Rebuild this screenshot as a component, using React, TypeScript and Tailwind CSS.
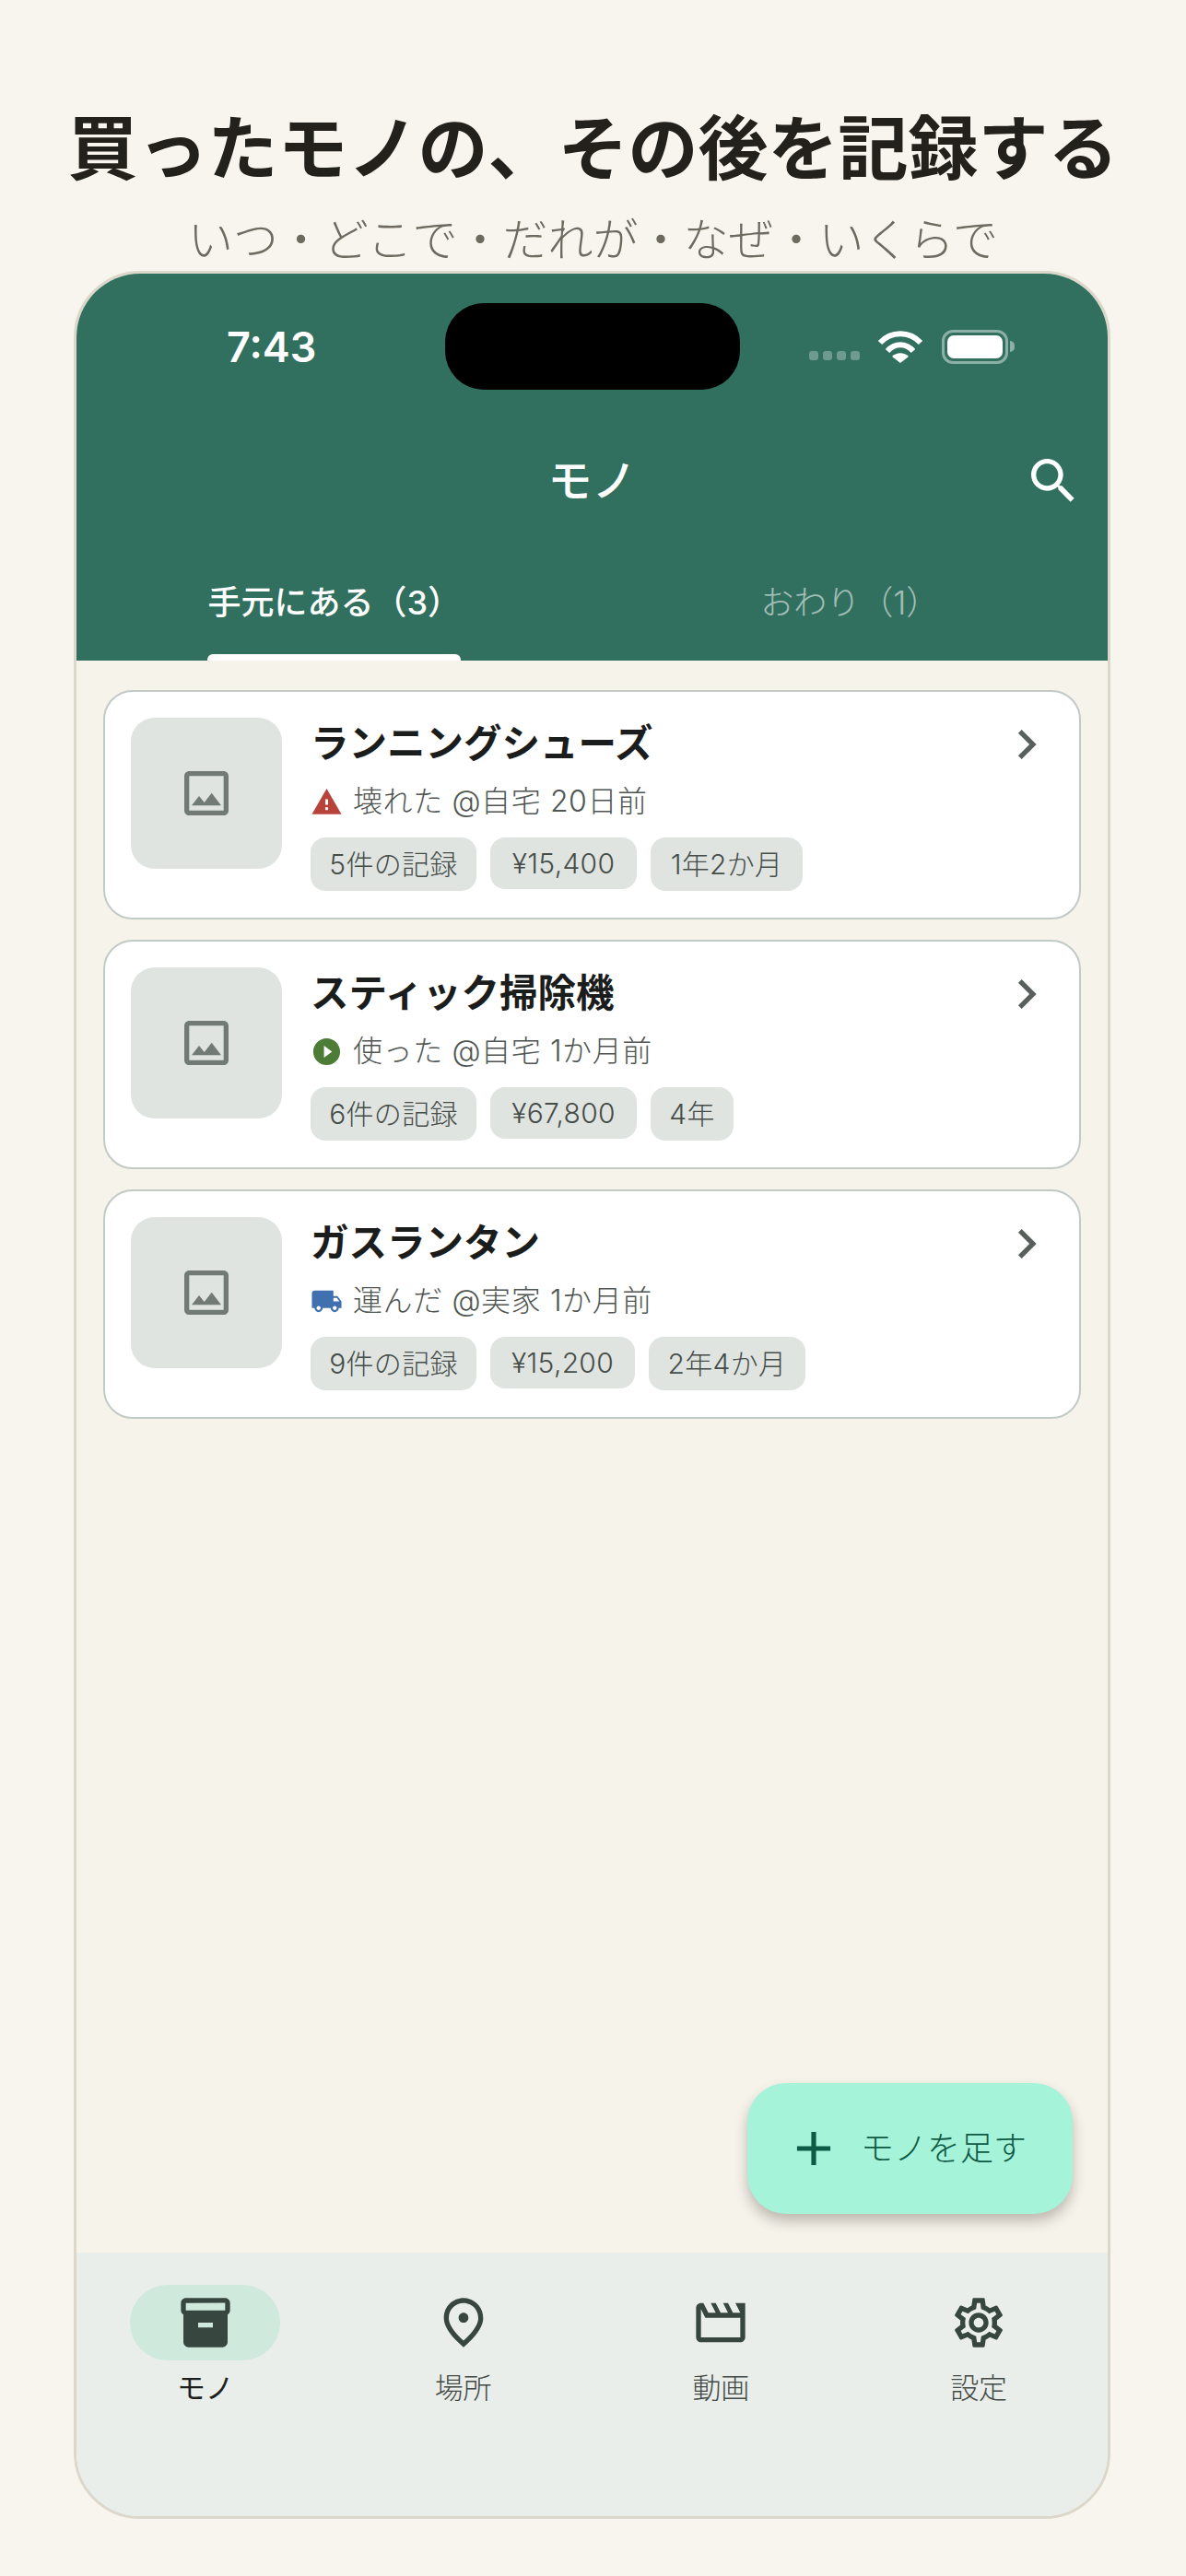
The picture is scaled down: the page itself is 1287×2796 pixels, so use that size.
import React from "react";

const ICONS = {
  image:
    "M19 5v14H5V5h14m0-2H5c-1.1 0-2 .9-2 2v14c0 1.1.9 2 2 2h14c1.1 0 2-.9 2-2V5c0-1.1-.9-2-2-2zm-4.86 8.86-3 3.87L9 13.14 6 17h12l-3.86-5.14z",
  chevron: "M10 6 8.59 7.41 13.17 12l-4.58 4.59L10 18l6-6z",
  search:
    "M15.5 14h-.79l-.28-.27C15.41 12.59 16 11.11 16 9.5 16 5.91 13.09 3 9.5 3S3 5.91 3 9.5 5.91 16 9.5 16c1.61 0 3.09-.59 4.23-1.57l.27.28v.79l5 4.99L20.49 19l-4.99-5zm-6 0C7.01 14 5 11.99 5 9.5S7.01 5 9.5 5 14 7.01 14 9.5 11.99 14 9.5 14z",
  add: "M19 13h-6v6h-2v-6H5v-2h6V5h2v6h6v2z",
  warning: "M1 21h22L12 2 1 21zm12-3h-2v-2h2v2zm0-4h-2v-4h2v4z",
  play: "M12 2C6.48 2 2 6.48 2 12s4.48 10 10 10 10-4.48 10-10S17.52 2 12 2zm-2 14.5v-9l6 4.5-6 4.5z",
  truck:
    "M20 8h-3V4H3c-1.1 0-2 .9-2 2v11h2c0 1.66 1.34 3 3 3s3-1.34 3-3h6c0 1.66 1.34 3 3 3s3-1.34 3-3h2v-5l-3-4zM6 18.5c-.83 0-1.5-.67-1.5-1.5s.67-1.5 1.5-1.5 1.5.67 1.5 1.5-.67 1.5-1.5 1.5zm13.5-9 1.96 2.5H17V9.5h2.5zm-1.5 9c-.83 0-1.5-.67-1.5-1.5s.67-1.5 1.5-1.5 1.5.67 1.5 1.5-.67 1.5-1.5 1.5z",
  box: "M20 2H4c-1 0-2 .9-2 2v3.01c0 .72.43 1.34 1 1.69V20c0 1.1 1.1 2 2 2h14c.9 0 2-.9 2-2V8.7c.57-.35 1-.97 1-1.69V4c0-1.1-1-2-2-2zm-5 12H9v-2h6v2zm5-7H4V4l16-.02V7z",
  place:
    "M12 12c-1.1 0-2-.9-2-2s.9-2 2-2 2 .9 2 2-.9 2-2 2zm6-1.8C18 6.57 15.35 4 12 4s-6 2.57-6 6.2c0 2.34 1.95 5.44 6 9.14 4.05-3.7 6-6.8 6-9.14zM12 2c4.2 0 8 3.22 8 8.2 0 3.32-2.67 7.25-8 11.8-5.33-4.55-8-8.48-8-11.8C4 5.22 7.8 2 12 2z",
  movie:
    "M4 6.47 5.76 10H20v8H4V6.47M22 4h-4l2 4h-3l-2-4h-2l2 4h-3l-2-4H8l2 4H7L5 4H4c-1.1 0-1.99.9-1.99 2L2 18c0 1.1.9 2 2 2h16c1.1 0 2-.9 2-2V4z",
  settings:
    "M19.43 12.98c.04-.32.07-.64.07-.98 0-.34-.03-.66-.07-.98l2.11-1.65c.19-.15.24-.42.12-.64l-2-3.46c-.09-.16-.26-.25-.44-.25-.06 0-.12.01-.17.03l-2.49 1c-.52-.4-1.08-.73-1.69-.98l-.38-2.65C14.46 2.18 14.25 2 14 2h-4c-.25 0-.46.18-.49.42l-.38 2.65c-.61.25-1.17.59-1.69.98l-2.49-1c-.06-.02-.12-.03-.18-.03-.17 0-.34.09-.43.25l-2 3.46c-.13.22-.07.49.12.64l2.11 1.65c-.04.32-.07.65-.07.98 0 .33.03.66.07.98l-2.11 1.65c-.19.15-.24.42-.12.64l2 3.46c.09.16.26.25.44.25.06 0 .12-.01.17-.03l2.49-1c.52.4 1.08.73 1.69.98l.38 2.65c.03.24.24.42.49.42h4c.25 0 .46-.18.49-.42l.38-2.65c.61-.25 1.17-.59 1.69-.98l2.49 1c.06.02.12.03.18.03.17 0 .34-.09.43-.25l2-3.46c.12-.22.07-.49-.12-.64l-2.11-1.65zm-1.98-1.71c.04.31.05.52.05.73 0 .21-.02.43-.05.73l-.14 1.13.89.7 1.08.84-.7 1.21-1.27-.51-1.04-.42-.9.68c-.43.32-.84.56-1.25.73l-1.06.43-.16 1.13-.2 1.35h-1.4l-.19-1.35-.16-1.13-1.06-.43c-.43-.18-.83-.41-1.23-.71l-.91-.7-1.06.43-1.27.51-.7-1.21 1.08-.84.89-.7-.14-1.13c-.03-.31-.05-.54-.05-.74s.02-.43.05-.73l.14-1.13-.89-.7-1.08-.84.7-1.21 1.27.51 1.04.42.9-.68c.43-.32.84-.56 1.25-.73l1.06-.43.16-1.13.2-1.35h1.39l.19 1.35.16 1.13 1.06.43c.43.18.83.41 1.23.71l.91.7 1.06-.43 1.27-.51.7 1.21-1.07.85-.89.7.14 1.13zM12 8c-2.21 0-4 1.79-4 4s1.79 4 4 4 4-1.79 4-4-1.79-4-4-4zm0 6c-1.1 0-2-.9-2-2s.9-2 2-2 2 .9 2 2-.9 2-2 2z",
};

function Icon({ name, className }: { name: keyof typeof ICONS; className: string }) {
  return (
    <svg viewBox="0 0 24 24" fill="currentColor" className={className}>
      <path d={ICONS[name]} />
    </svg>
  );
}

interface Item {
  name: string;
  icon: keyof typeof ICONS;
  iconColor: string;
  status: string;
  chips: { label: string; width: string; short?: boolean }[];
}

const items: Item[] = [
  {
    name: "ランニングシューズ",
    icon: "warning",
    iconColor: "text-[#b8433a]",
    status: "壊れた @自宅 20日前",
    chips: [
      { label: "5件の記録", width: "w-[180px]" },
      { label: "¥15,400", width: "w-[159px]", short: true },
      { label: "1年2か月", width: "w-[165px]" },
    ],
  },
  {
    name: "スティック掃除機",
    icon: "play",
    iconColor: "text-[#4d7c36]",
    status: "使った @自宅 1か月前",
    chips: [
      { label: "6件の記録", width: "w-[180px]" },
      { label: "¥67,800", width: "w-[159px]", short: true },
      { label: "4年", width: "w-[90px]" },
    ],
  },
  {
    name: "ガスランタン",
    icon: "truck",
    iconColor: "text-[#4070b0]",
    status: "運んだ @実家 1か月前",
    chips: [
      { label: "9件の記録", width: "w-[180px]" },
      { label: "¥15,200", width: "w-[157px]", short: true },
      { label: "2年4か月", width: "w-[170px]" },
    ],
  },
];

const navItems: { label: string; icon: keyof typeof ICONS }[] = [
  { label: "モノ", icon: "box" },
  { label: "場所", icon: "place" },
  { label: "動画", icon: "movie" },
  { label: "設定", icon: "settings" },
];

function StatusBar() {
  return (
    <div className="flex h-[94px] items-center">
      <div className="w-[400px] pl-[163px] font-['Inter',sans-serif] text-[45px] font-semibold leading-none text-white">
        7:43
      </div>
      <div className="h-[94px] w-[320px] rounded-[42px] bg-black" />
      <div className="flex flex-1 items-center pl-[75px]">
        <div className="mt-[20px] flex gap-[5px]">
          <span className="h-[10px] w-[10px] rounded-[3px] bg-white/30" />
          <span className="h-[10px] w-[10px] rounded-[3px] bg-white/30" />
          <span className="h-[10px] w-[10px] rounded-[3px] bg-white/30" />
          <span className="h-[10px] w-[10px] rounded-[3px] bg-white/30" />
        </div>
        <svg viewBox="0 0 50 36" className="ml-[19px] h-[36px] w-[50px]" fill="none" stroke="white" strokeWidth="6">
          <path d="M3 14C15 1 35 1 47 14" />
          <path d="M11 23C19 14 31 14 39 23" />
          <path d="M25 36 16 29C21 24 29 24 34 29Z" fill="white" stroke="none" />
        </svg>
        <div className="ml-[20px] flex items-center">
          <div className="h-[37px] w-[72px] rounded-[12px] border-[3px] border-white/45 p-[3px]">
            <div className="h-full w-full rounded-[7px] bg-white" />
          </div>
          <div className="ml-[2px] h-[12px] w-[5px] rounded-r-full bg-white/45" />
        </div>
      </div>
    </div>
  );
}

function ItemCard({ item }: { item: Item }) {
  return (
    <div className="flex h-[249px] gap-[31px] rounded-[32px] border-2 border-[#c2cac6] bg-white pl-[28px] pr-[25px] pt-[28px]">
      <div className="flex h-[164px] w-[164px] shrink-0 items-center justify-center rounded-[26px] bg-[#dfe4e1]">
        <Icon name="image" className="h-[64px] w-[64px] text-[#727a76]" />
      </div>
      <div className="min-w-0 flex-1">
        <div className="flex h-[58px] items-center justify-between">
          <div className="text-[41.5px] font-bold leading-none text-[#1b1d1c]">{item.name}</div>
          <Icon name="chevron" className="h-[64px] w-[64px] text-[#59605c]" />
        </div>
        <div className="mt-[11px] flex h-[44px] items-center gap-[11px]">
          <Icon name={item.icon} className={`h-[35px] w-[35px] ${item.iconColor}`} />
          <span className="font-['Inter','Noto_Sans_CJK_JP',sans-serif] text-[32px] font-light leading-none tracking-[0.6px] text-[#4f5652]">
            {item.status}
          </span>
        </div>
        <div className="mt-[17px] flex items-start gap-[15px]">
          {item.chips.map((chip) => (
            <span
              key={chip.label}
              className={`flex items-center justify-center rounded-[16px] bg-[#dfe4e1] font-['Inter','Noto_Sans_CJK_JP',sans-serif] text-[30px] font-light leading-none tracking-[0.3px] text-[#464d49] ${chip.width} ${
                chip.short ? "h-[56px]" : "h-[58px]"
              }`}
            >
              {chip.label}
            </span>
          ))}
        </div>
      </div>
    </div>
  );
}

export default function App() {
  return (
    <div className="min-h-[2796px] bg-[#f8f5ee] font-['Roboto','Noto_Sans_CJK_JP',sans-serif]">
      <div className="pt-[106px] text-center font-['Noto_Sans_CJK_JP',sans-serif]">
        <h1 className="text-[76px] font-bold leading-[100px] text-[#22211c]">買ったモノの、その後を記録する</h1>
        <p className="mt-[21px] text-[49px] font-light leading-[60px] text-[#6e6a60]">いつ・どこで・だれが・なぜ・いくらで</p>
      </div>

      <div className="ml-[80px] mt-[7px] flex h-[2440px] w-[1125px] flex-col overflow-hidden rounded-[72px] border-[3px] border-[#dcd7cb] font-['Inter','Noto_Sans_CJK_JP',sans-serif]">
        <header className="h-[420px] bg-[#316f5e] pt-[32px]">
          <StatusBar />
          <div className="relative mt-[49px] flex h-[100px] items-center justify-center">
            <span className="text-[48px] font-medium leading-none text-white">モノ</span>
            <Icon name="search" className="absolute right-[27px] top-[18px] h-[64px] w-[64px] text-white" />
          </div>
          <div className="grid h-[145px] grid-cols-2">
            <div className="flex flex-col items-center justify-between pt-[64px]">
              <span className="text-[36px] font-medium leading-none text-white">手元にある（3）</span>
              <div className="h-[7px] w-[275px] rounded-t-[6px] bg-white" />
            </div>
            <div className="flex flex-col items-center pt-[64px]">
              <span className="text-[36px] font-light leading-none text-white/55">おわり（1）</span>
            </div>
          </div>
        </header>

        <main className="relative flex flex-1 flex-col gap-[22px] bg-[#f6f3eb] px-[29px] pt-[32px]">
          {items.map((item) => (
            <ItemCard key={item.name} item={item} />
          ))}
          <button
            type="button"
            className="absolute bottom-[42px] right-[38px] flex h-[142px] w-[353px] items-center gap-[20px] rounded-[42px] bg-[#a5f3d9] pl-[41px] text-[36px] font-light leading-none text-[#0f5a45] shadow-[0_8px_14px_rgba(60,50,40,0.3)]"
          >
            <Icon name="add" className="h-[62px] w-[62px]" />
            <span>モノを足す</span>
          </button>
        </main>

        <nav className="grid h-[286px] grid-cols-4 bg-[#e9eeea] pt-[35px]">
          {navItems.map((nav, i) => (
            <div key={nav.label} className="flex flex-col items-center">
              <div
                className={`flex h-[82px] w-[163px] items-center justify-center rounded-[41px] ${
                  i === 0 ? "bg-[#cfe9dd]" : ""
                }`}
              >
                <Icon name={nav.icon} className="h-[64px] w-[64px] text-[#37473f]" />
              </div>
              <span
                className={`mt-[12px] text-[31px] leading-[36px] ${
                  i === 0 ? "font-normal text-[#1c1f1d]" : "font-light text-[#434a46]"
                }`}
              >
                {nav.label}
              </span>
            </div>
          ))}
        </nav>
      </div>
    </div>
  );
}
